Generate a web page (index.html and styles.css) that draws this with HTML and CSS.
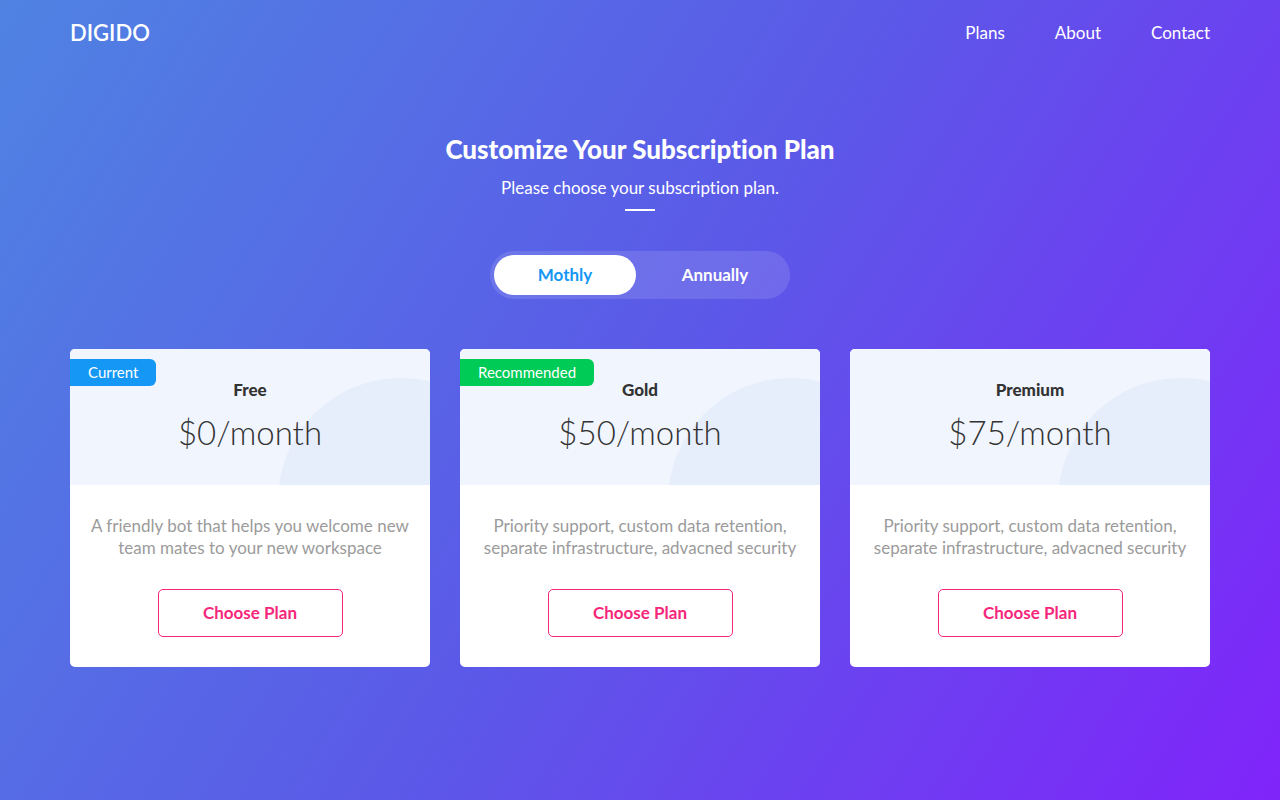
FILE: index.html
```html
<!DOCTYPE html>
<html lang="en">
<head>
<meta charset="utf-8">
<meta name="viewport" content="width=device-width, initial-scale=1">
<title>Digido – Plans</title>
<link rel="stylesheet" href="styles.css">
</head>
<body>
<header class="site-header container">
  <a class="logo" href="#">DIGIDO</a>
  <nav class="nav">
    <a href="#">Plans</a>
    <a href="#">About</a>
    <a href="#">Contact</a>
  </nav>
</header>
<main class="container">
  <section class="intro">
    <h1 class="title">Customize Your Subscription Plan</h1>
    <p class="subtitle">Please choose your subscription plan.</p>
    <div class="rule"></div>
    <div class="toggle">
      <button class="toggle-option active" type="button" aria-pressed="true">Mothly</button>
      <button class="toggle-option" type="button" aria-pressed="false">Annually</button>
    </div>
  </section>
  <section class="plans">
    <article class="card">
      <div class="card-head">
        <span class="badge badge-current">Current</span>
        <h2 class="plan-name">Free</h2>
        <p class="price">$0/month</p>
      </div>
      <div class="card-body">
        <p class="description">A friendly bot that helps you welcome new team mates to your new workspace</p>
        <button class="choose" type="button">Choose Plan</button>
      </div>
    </article>
    <article class="card">
      <div class="card-head">
        <span class="badge badge-recommended">Recommended</span>
        <h2 class="plan-name">Gold</h2>
        <p class="price">$50/month</p>
      </div>
      <div class="card-body">
        <p class="description">Priority support, custom data retention, separate infrastructure, advacned security</p>
        <button class="choose" type="button">Choose Plan</button>
      </div>
    </article>
    <article class="card">
      <div class="card-head">
        <h2 class="plan-name">Premium</h2>
        <p class="price">$75/month</p>
      </div>
      <div class="card-body">
        <p class="description">Priority support, custom data retention, separate infrastructure, advacned security</p>
        <button class="choose" type="button">Choose Plan</button>
      </div>
    </article>
  </section>
</main>
</body>
</html>
```
FILE: styles.css
```css
* {
  box-sizing: border-box;
}

body {
  margin: 0;
  min-height: 100vh;
  background: linear-gradient(122deg, #4f83e2 0%, #5b59e8 50%, #8024fa 100%);
  font-family: Lato, "Open Sans", sans-serif;
  font-size: 17px;
  line-height: 22px;
  font-variant-ligatures: none;
  color: #fff;
}

h1, h2, p {
  margin: 0;
}

a {
  color: inherit;
  text-decoration: none;
}

button {
  font: inherit;
  font-weight: 700;
  cursor: pointer;
}

.container {
  max-width: 1200px;
  margin: 0 auto;
  padding: 0 30px;
}

.site-header {
  display: flex;
  align-items: center;
  justify-content: space-between;
  height: 66px;
}

.logo {
  font-size: 22px;
  font-weight: 600;
}

.nav {
  display: flex;
  gap: 50px;
}

.intro {
  display: flex;
  flex-direction: column;
  align-items: center;
  padding-top: 67px;
  text-align: center;
}

.title {
  font-size: 26px;
  line-height: 32px;
  font-weight: 900;
}

.subtitle {
  margin-top: 12px;
}

.rule {
  width: 30px;
  height: 2px;
  margin-top: 10px;
  background: #fff;
}

.toggle {
  display: grid;
  grid-template-columns: 142px 1fr;
  gap: 8px;
  width: 300px;
  max-width: 100%;
  margin-top: 40px;
  padding: 4px;
  border-radius: 24px;
  background: rgba(255, 255, 255, 0.12);
}

.toggle-option {
  height: 40px;
  padding: 0;
  border: 0;
  border-radius: 20px;
  background: transparent;
  color: #fff;
}

.toggle-option.active {
  background: #fff;
  color: #1497f5;
}

.plans {
  display: grid;
  grid-template-columns: repeat(auto-fit, minmax(320px, 1fr));
  gap: 30px;
  padding: 50px 0;
}

.card {
  overflow: hidden;
  border-radius: 5px;
  background: #fff;
  text-align: center;
}

.card-head {
  position: relative;
  overflow: hidden;
  padding: 30px 20px 32px;
  background: #f1f5fe;
  color: #333;
}

.card-head::before {
  content: "";
  position: absolute;
  top: 29px;
  right: -94px;
  width: 246px;
  height: 246px;
  border-radius: 50%;
  background: #e7eefb;
}

.badge {
  position: absolute;
  top: 10px;
  left: 0;
  padding: 0 18px;
  border-radius: 0 6px 6px 0;
  font-size: 15px;
  line-height: 27px;
  color: #fff;
}

.badge-current {
  background: #1497f5;
}

.badge-recommended {
  background: #00cb56;
}

.plan-name {
  position: relative;
  font-size: 17px;
  line-height: 22px;
  font-weight: 900;
}

.price {
  position: relative;
  margin-top: 10px;
  font-size: 33px;
  line-height: 42px;
  font-weight: 300;
}

.card-body {
  padding: 30px 20px;
  color: #9b9b9b;
}

.choose {
  width: 185px;
  height: 48px;
  margin-top: 30px;
  border: 1px solid #f5277b;
  border-radius: 5px;
  background: #fff;
  color: #f5277b;
}
```
